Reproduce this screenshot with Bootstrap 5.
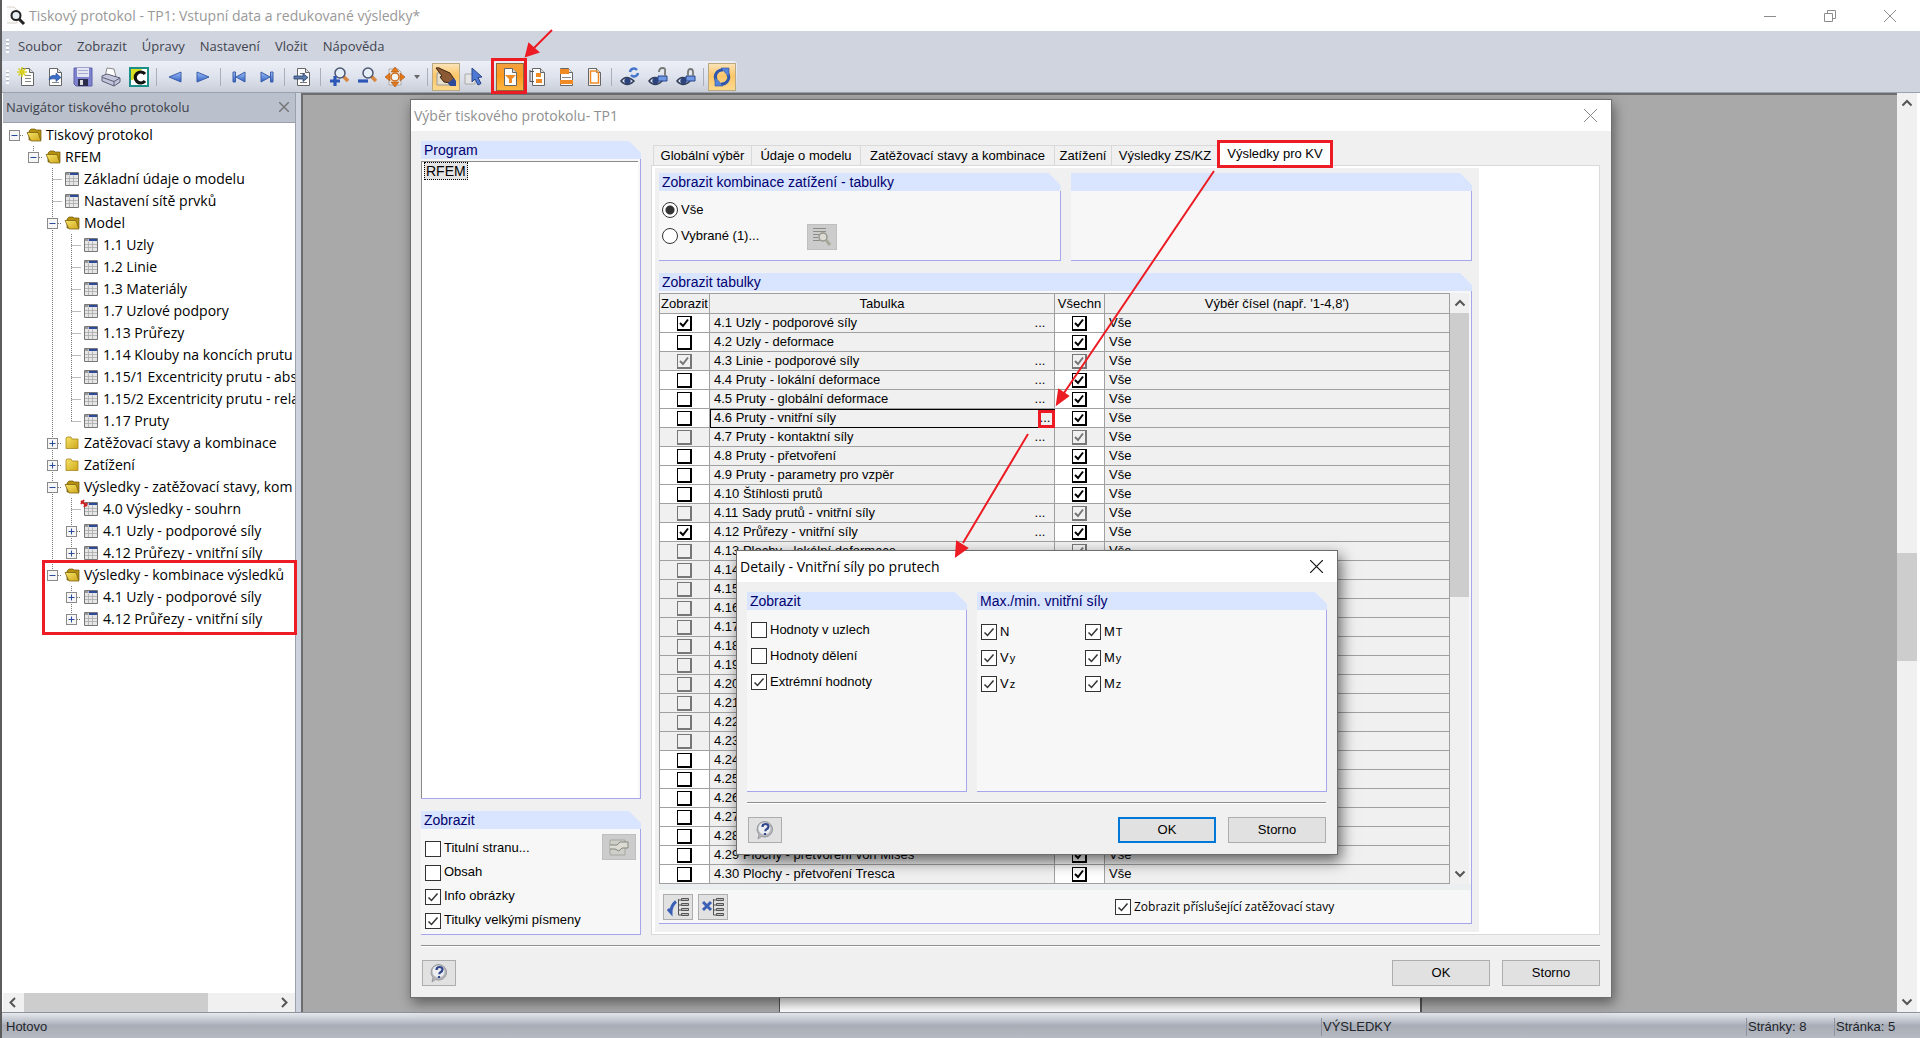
<!DOCTYPE html>
<html lang="cs">
<head>
<meta charset="utf-8">
<meta name="viewport" content="width=device-width, initial-scale=1">
<title>Tiskový protokol - TP1</title>
<link rel="stylesheet" href="https://cdn.jsdelivr.net/npm/bootstrap@5.3.0/dist/css/bootstrap.min.css">
<style>
  body { font-family: "Liberation Sans", Arial, sans-serif; font-size: 13px; line-height: 18px; color: #000; background: #fff; }
  svg { display: block; flex: none; }
  .seg { font-family: "Open Sans", "Segoe UI", sans-serif; }
  .app { border-left: 2px solid #5c5c5c; }

  /* window frame */
  .titlebar { height: 31px; font-size: 14px; color: #999; background: #fff; }
  .titlebar svg.logo { margin: 0 3px 0 4px; }
  .winctl { width: 60px; height: 31px; border: 0; background: none; padding: 0; color: #8c8c8c; }
  .menubar { height: 30px; background: #d0d4de; font-size: 13px; gap: 15px; }
  .menubar a { color: #3f4450; text-decoration: none; }
  .menubar .grip { margin-right: -6px; }
  .grip { width: 3px; height: 14px; background: repeating-linear-gradient(#fff 0 2px, #b4b9c6 2px 3px, transparent 3px 4px); }
  .toolrow { height: 32px; background: #d0d4de; border-bottom: 1px solid #9ba1ad; }
  .tools { height: 31px; width: 735px; background: linear-gradient(#eceff7, #dfe3ed 50%, #c9ced9); border-radius: 0 4px 4px 0; }
  .tbtn { width: 28px; height: 28px; padding: 0; border: 1px solid transparent; background: none; display: flex; align-items: center; justify-content: center; }
  .tbtn.drop { width: 15px; }
  .tbtn.lit { border-color: #b9a983; background: linear-gradient(#fbe3b8, #fcc668 45%, #fdd98c); }
  .tbtn.hot { border-color: #8a6a3c; background: linear-gradient(#f3a03e, #fb9a1f 45%, #fdb642); }
  .tsep { width: 8px; height: 18px; background: linear-gradient(#a9afbc, #a9afbc) 3px 0/1px 100% no-repeat; }

  /* navigator */
  .nav-pane { width: 293px; margin-left: 1px; border-right: 1px solid #9aa0ac; }
  .nav-head { height: 30px; background: #bac1cd; color: #3c4049; border-bottom: 1px solid #9aa0ac; font-size: 13px; padding: 0 2px 2px 3px; }
  .nav-tree { background: #fff; padding: 1px 0 0 2px; overflow: hidden; }
  .trow { height: 22px; font-size: 14px; white-space: nowrap; }
  .trow .fic { margin: 0 4px 0 2px; }
  .trow .tic { margin: 0 5px 0 3px; }
  .splitter { width: 5px; background: #ccd2de; }
  .sbar { background: #f0f0f0; }
  .vbar { width: 20px; margin-right: 3px; }
  .sthumb { background: #cdcdcd; }
  .sbtn { border: 0; background: none; padding: 0; display: flex; align-items: center; justify-content: center; color: #555; }
  .vbtn { height: 20px; flex: none; }

  /* document area */
  .canvas { background: #a9a9a9; border: 2px solid #6d6d6d; border-right: 0; border-bottom: 0; }
  .sheet { width: 643px; height: 700px; background: #fff; border-left: 1px solid #555; border-right: 2px solid #555; }

  /* dialogs */
  .dlg { position: absolute; background: #f0f0f0; border: 1px solid #6e6e6e; box-shadow: 2px 5px 12px rgba(0,0,0,.45); }
  .dlg-main { left: 410px; top: 99px; width: 1202px; height: 899px; }
  .dlg-det { left: 736px; top: 550px; width: 602px; height: 305px; box-shadow: 3px 6px 14px rgba(0,0,0,.6); }
  .dlg-title { height: 31px; background: #fff; font-size: 14px; padding: 0 12px 0 3px; }
  .dlg-main .dlg-title { color: #8f8f8f; }
  .dlg-x { border: 0; background: none; padding: 0; width: 18px; height: 18px; display: flex; align-items: center; justify-content: center; }
  .dlg-foot { padding: 10px 11px 11px 10px; }
  .foot-row { padding: 13px 0 0 1px; gap: 12px; }
  .grp { background: #f7f7f7; border-right: 1px solid #a6a6ea; border-bottom: 1px solid #a6a6ea; min-width: 0; display: flex; flex-direction: column; }
  .grp-head { height: 18px; margin: 0 -1px 1px 0; background: #f0f0f0; flex: none; }
  .grp-head span { display: block; height: 18px; padding-left: 3px; background: #d9e4fe; color: #000070; clip-path: polygon(0 0, calc(100% - 12px) 0, 100% 12px, 100% 100%, 0 100%); font-size: 14px; }
  .proglist { background: #fff; border-top: 1px solid #8a8a8a; border-left: 1px solid #8a8a8a; margin: 1px 2px 0 0; padding: 0 2px; }
  .proglist span { border: 1px dotted #000; background: #e4e4e4; padding: 0 1px; line-height: 16px; display: inline-block; font-size: 14px; }
  .ck, .rd { appearance: none; margin: 0; width: 16px; height: 16px; border: 1px solid #333; background: #fff; flex: none; }
  .rd { border-radius: 50%; }
  .rd:checked { background: radial-gradient(#333 0 4px, #fff 5px); }
  .ck:checked { background: #fff url("data:image/svg+xml,%3Csvg xmlns='http://www.w3.org/2000/svg' width='14' height='14'%3E%3Cpath d='M2.5 7.5L5.500 10.500L11.500 3.500' fill='none' stroke='%23333' stroke-width='1.500'/%3E%3C/svg%3E") center no-repeat; }
  .opt { display: flex; gap: 3px; line-height: 16px; }
  .rule { height: 2px; border-top: 1px solid #8f8f8f; background: #fff; }
  .wbtn { height: 26px; width: 98px; border: 1px solid #adadad; background: #e1e1e1; padding: 0; line-height: 18px; color: #000; }
  .wbtn.def { border: 2px solid #0078d7; }
  .ibtn { height: 26px; border: 1px solid #adadad; background: #e1e1e1; padding: 0; display: flex; align-items: center; justify-content: center; }
  .ibtn:disabled { background: #ccc; border-color: #bfbfbf; }
  .w34 { width: 34px; }
  .w30 { width: 30px; }

  /* main dialog */
  .main-body { padding: 10px 11px 0 10px; }
  .left-col { width: 220px; margin-right: 10px; gap: 12px; }
  .show-grp { height: 124px; }
  .show-in { padding: 11px 4px 0 4px; }
  .show-in .opt { line-height: 14px; }
  .show-btn { margin-top: -7px; }
  .tabrow { padding-left: 2px; height: 24px; }
  .tabrow button { border: 1px solid #d9d9d9; border-bottom: 0; border-right: 0; background: #f0f0f0; height: 20px; padding: 0; text-align: center; white-space: nowrap; color: #000; }
  .tabrow .on { height: 24px; background: #fff; border-right: 1px solid #d9d9d9; }
  .t1 { width: 98px; } .t2 { width: 109px; } .t3 { width: 194px; } .t4 { width: 57px; } .t5 { width: 107px; } .t6 { width: 114px; }
  .tabpane { background: #fff; border: 1px solid #d9d9d9; padding: 2px 0 2px 3px; }
  .tabin { width: 824px; background: #f0f0f0; padding: 5px 7px 8px 4px; }
  .top-groups { gap: 10px; height: 88px; margin-bottom: 12px; }
  .radios { padding: 10px 0 0 3px; }
  .radio-col { width: 145px; gap: 10px; }
  .pick { margin-top: 22px; }
  .tl-wrap { padding: 1px 2px 0 0; }
  .strip { height: 6px; background: #ebefef; }
  .vthumb { height: 284px; }
  .foot-in { gap: 5px; padding-left: 4px; }
  .rel { margin-left: auto; width: 356px; font-size: 12px; }

  /* table list */
  .tl { border-collapse: collapse; table-layout: fixed; width: 791px; }
  .tl th, .tl td { border: 1px solid #a0a0a0; height: 19px; padding: 0; font-weight: 400; line-height: 18px; overflow: hidden; white-space: nowrap; background: #f0f0f0; }
  .tl th { height: 20px; text-align: center; }
  .tl .c1, .tl .c3 { width: 50px; text-align: center; }
  .tl td.live { background: #fff; }
  .tl .txt { padding-left: 4px; }
  .tl .more { border: 0; background: none; padding: 0; width: 16px; line-height: 18px; margin-right: 6px; }
  .tl .cur .more { margin-right: 1px; }
  .tl .cur { outline: 1px solid #000; outline-offset: -1px; }
  .tck { appearance: none; display: block; margin: 0 auto; width: 15px; height: 15px; border: 1px solid #000; border-right-width: 2px; border-bottom-width: 2px; background: #fff; }
  .tck:checked { background: #fff url("data:image/svg+xml,%3Csvg xmlns='http://www.w3.org/2000/svg' width='12' height='12'%3E%3Cpath d='M2 6L5 9L10 2.500' fill='none' stroke='black' stroke-width='2'/%3E%3C/svg%3E") center no-repeat; }
  .tck:disabled { opacity: .5; background-color: #f0f0f0; }

  /* details dialog */
  .det-body { padding: 10px 10px 0 10px; gap: 10px; }
  .det-l { width: 220px; }
  .det-list { padding: 11px 4px; gap: 10px; }
  .force { padding: 13px 4px; }
  .force > div { gap: 10px; width: 104px; }
  .force .idx { font-size: 11px; padding-left: 1px; }

  /* status bar */
  .status { height: 26px; border-top: 1px solid #8e949f; background: linear-gradient(#e6e8ed, #b5bac4 40%, #a7acb6 50%, #b6bac2); color: #22252b; padding-top: 2px; }
  .status span { border-left: 1px solid #8e939d; padding-left: 1px; }
  .status .s0 { border: 0; padding-left: 4px; }
  .s2 { width: 425px; } .s3 { width: 88px; } .s4 { width: 86px; }
  .marks { position: absolute; left: 0; top: 0; pointer-events: none; }
</style>
<script src="https://cdn.jsdelivr.net/npm/bootstrap@5.3.0/dist/js/bootstrap.bundle.min.js"></script>
</head>
<body>
<svg width="0" height="0" class="position-absolute">
  <defs>
    <linearGradient id="gb" x2="0" y2="1"><stop stop-color="#9fc0f8"/><stop offset="1" stop-color="#2f5fc4"/></linearGradient>
    <linearGradient id="gf" x2="1" y2="1"><stop stop-color="#f6e468"/><stop offset="1" stop-color="#cfa61a"/></linearGradient>
    <symbol id="doc" viewBox="0 0 20 20"><path d="M4.500 1.500h8l4 4v13h-12z" fill="#fdfdfd" stroke="#666"/><path d="M12.500 1.500v4h4" fill="#ddd" stroke="#666"/></symbol>
    <symbol id="eye" viewBox="0 0 20 20"><path d="M1 14q5-7 13 0q-7 7-13 0z" fill="#dfe6f6" stroke="#333d55" stroke-width="1.500"/><circle cx="7.500" cy="14" r="3.200" fill="#2c437c"/></symbol>
    <symbol id="fopen" viewBox="0 0 16 14"><path d="M3 12V3l2-2h4l1 1h5v10z" fill="#b8900f" stroke="#6d570c" stroke-width=".7"/><path d="M1 4.500h11l3 8.500H5z" fill="url(#gf)" stroke="#6d570c" stroke-width=".7"/></symbol>
    <symbol id="fclosed" viewBox="0 0 16 14"><path d="M2 12.500V2l1-1h4l1 2h6v9.500z" fill="url(#gf)" stroke="#a8861a" stroke-width=".8"/></symbol>
    <symbol id="tbl" viewBox="0 0 14 14"><path d="M.5.500h13v13H.5z" fill="#e6e6e6" stroke="#777"/><path d="M1 1h3.500v2H1z" fill="#999"/><path d="M5 1h8v2H5z" fill="#2d4a9a"/><path d="M1 6.500h12M1 9.500h12M4.500 3.500V13M8.500 3.500V13" stroke="#aaa" stroke-width=".8"/></symbol>
    <symbol id="help" viewBox="0 0 20 20"><path d="M10 1.500a8 7.800 0 1 1-3.500 15L3 19l1-4.500A8 7.800 0 0 1 10 1.500z" fill="#b4b6ba" stroke="#9a9ca1"/><ellipse cx="9.500" cy="8.500" rx="6" ry="6" fill="#eceef1"/><path d="M7.500 7q0-3 3-3t3 2.600q0 1.600-2 2.600-1.200.6-1.200 2M10 13v2" fill="none" stroke="#33488c" stroke-width="2.200"/></symbol>
    <symbol id="tree" viewBox="0 0 12 20"><path d="M1.500 2v16M1.500 3h3M1.500 8h3M1.500 13h3M1.500 18h3" stroke="#555" fill="none"/><path d="M4.500 1.500h7v2h-7zM4.500 6.500h7v2h-7zM4.500 11.500h7v2h-7zM4.500 16.500h7v2h-7z" fill="#bbb" stroke="#555"/></symbol>
  </defs>
</svg>

<div class="app d-flex flex-column vh-100 overflow-hidden">
  <header class="titlebar seg d-flex align-items-center flex-shrink-0">
    <svg class="logo" width="20" height="20" viewBox="0 0 20 20"><path d="M1 1h7l3 3v13H1" fill="#fafafa" stroke="#d8d0c8"/><circle cx="10" cy="9.500" r="4.500" fill="#e9eef2" stroke="#222" stroke-width="2"/><path d="M13 13l5 5" stroke="#222" stroke-width="3"/></svg>
    <span>Tiskový protokol - TP1: Vstupní data a redukované výsledky*</span>
    <button class="winctl ms-auto" aria-label="Minimalizovat"><svg class="mx-auto" width="12" height="12"><path d="M0 6.500h12" stroke="currentColor"/></svg></button>
    <button class="winctl" aria-label="Obnovit"><svg class="mx-auto" width="12" height="12"><path d="M.5 3.500h8v8h-8zM3.500 3V.5h8v8H9" fill="none" stroke="currentColor"/></svg></button>
    <button class="winctl" aria-label="Zavřít"><svg class="mx-auto" width="12" height="12"><path d="M0 0l12 12M12 0L0 12" stroke="currentColor"/></svg></button>
  </header>

  <nav class="menubar seg d-flex align-items-center ps-1 flex-shrink-0">
    <span class="grip"></span>
    <a href="#">Soubor</a><a href="#">Zobrazit</a><a href="#">Úpravy</a><a href="#">Nastavení</a><a href="#">Vložit</a><a href="#">Nápověda</a>
  </nav>

  <div class="toolrow flex-shrink-0">
    <div class="tools d-flex align-items-center ps-1">
      <span class="grip me-1"></span>
      <button class="tbtn" aria-label="Nový"><svg width="20" height="20"><use href="#doc"/><path d="M8 8.500h6M8 11.500h6M8 14.500h6" stroke="#888"/><path d="M5 0v10M0 5h10M1.500 1.500l7 7M8.500 1.500l-7 7" stroke="#d8cf20" stroke-width="1.500"/></svg></button>
      <button class="tbtn" aria-label="Otevřít"><svg width="20" height="20"><use href="#doc"/><path d="M7 15.500h7" stroke="#888"/><path d="M4 12.500q1-5 7-4V6l5 4.500-5 4V12q-4-.5-7 .5z" fill="#3d6fc8" stroke="#244a92" stroke-width=".6"/></svg></button>
      <button class="tbtn" aria-label="Uložit"><svg width="20" height="20"><path d="M1 1h18v18H3l-2-2z" fill="#7f83cf" stroke="#5d61a8"/><path d="M4 1h12v9H4z" fill="#e4e5f2"/><path d="M5 3.500h10M5 6.500h10" stroke="#a9abd0"/><path d="M5 12h10v7H5z" fill="#2b2d4a"/><path d="M7 13h3v5H7z" fill="#ddd"/></svg></button>
      <button class="tbtn" aria-label="Tisk"><svg width="20" height="20"><path d="M4 10L6 1l7 1 2 8z" fill="#fff" stroke="#888"/><path d="M1 9l5-2 13 4v4l-6 4L1 14z" fill="#c3c5da" stroke="#5a5c75"/><path d="M1.500 10.500l11.500 4 6-3.500M13 14.500V19" fill="none" stroke="#5a5c75"/></svg></button>
      <button class="tbtn" aria-label="Písmo"><svg width="20" height="20"><path d="M1 1h18v18H1z" fill="#fff" stroke="#1b8f88" stroke-width="2"/><path d="M2 2h11L4 13H2z" fill="#d9e021"/><path d="M16 7a5.500 5.500 0 1 0 0 7" fill="none" stroke="#111" stroke-width="3.200"/></svg></button>
      <span class="tsep"></span>
      <button class="tbtn" aria-label="Předchozí"><svg width="14" height="14"><path d="M1 7l12-5v10z" fill="url(#gb)" stroke="#3a5ea8"/></svg></button>
      <button class="tbtn" aria-label="Další"><svg width="14" height="14"><path d="M13 7L1 2v10z" fill="url(#gb)" stroke="#3a5ea8"/></svg></button>
      <span class="tsep"></span>
      <button class="tbtn" aria-label="První"><svg width="14" height="14"><path d="M1 2h2.500v10H1zM4 7l9-5v10z" fill="url(#gb)" stroke="#3a5ea8"/></svg></button>
      <button class="tbtn" aria-label="Poslední"><svg width="14" height="14"><path d="M13 2h-2.500v10H13zM10 7L1 2v10z" fill="url(#gb)" stroke="#3a5ea8"/></svg></button>
      <span class="tsep"></span>
      <button class="tbtn" aria-label="Přejít"><svg width="20" height="20"><use href="#doc"/><path d="M7 6.500h5M7 15.500h7" stroke="#777"/><path d="M1 9h9V6.500l5 4-5 4V12H1z" fill="#5b7aa8" stroke="#27406b" stroke-width=".8"/></svg></button>
      <span class="tsep"></span>
      <button class="tbtn" aria-label="Zvětšit"><svg width="20" height="20"><path d="M14 9l5 5" stroke="#d98640" stroke-width="3.500"/><circle cx="11" cy="6" r="5" fill="#e6eefa" stroke="#4a5670" stroke-width="1.500"/><path d="M6 9v10M1 14h10" stroke="#2c56b8" stroke-width="3.200"/></svg></button>
      <button class="tbtn" aria-label="Zmenšit"><svg width="20" height="20"><path d="M14 9l5 5" stroke="#d98640" stroke-width="3.500"/><circle cx="11" cy="6" r="5" fill="#e6eefa" stroke="#4a5670" stroke-width="1.500"/><path d="M1 14h10" stroke="#2c56b8" stroke-width="3.200"/></svg></button>
      <button class="tbtn" aria-label="Zobrazit vše"><svg width="20" height="20"><path d="M4 2h9l3 3v13H4z" fill="#eee" stroke="#aaa"/><path d="M10 0l4 5H6zM10 20l4-5H6zM0 10l5-4v8zM20 10l-5-4v8z" fill="#e57a1c" stroke="#a8500c" stroke-width=".6"/><circle cx="10" cy="10" r="4" fill="#f4f4f4" stroke="#d06a18" stroke-width="1.500"/></svg></button>
      <button class="tbtn drop" aria-label="Více"><svg width="6" height="4"><path d="M0 0h6L3 4z" fill="#666"/></svg></button>
      <span class="tsep"></span>
      <button class="tbtn lit" aria-label="Ruka"><svg width="22" height="22"><path d="M2 7h12v12H2z" fill="#e8e0cc" stroke="#999"/><path d="M1 2q3-1 5 1l9 4 4 6-4 4-6-1-4-5 2-1z" fill="#8b5a34" stroke="#3d2412"/><path d="M13 17l6-5 2 3v5h-6z" fill="#2d4896"/></svg></button>
      <button class="tbtn" aria-label="Výběr"><svg width="20" height="20"><path d="M1 7h10v10H1z" fill="#e4e4e4" stroke="#aaa"/><path d="M8 1l10 9-4 .5 3 6-3 1.500-3-6-3 3z" fill="#4c7ad4" stroke="#2a4488"/></svg></button>
      <span class="tsep"></span>
      <button class="tbtn hot" aria-label="Filtr"><svg width="20" height="20"><use href="#doc"/><path d="M5 8h11l-4 4v4H9v-4z" fill="#f08a24"/></svg></button>
      <button class="tbtn" aria-label="Vložit"><svg width="20" height="20"><use href="#doc"/><path d="M2 3v12M2 4.500h4M2 14.500h4" stroke="#555"/><path d="M8 6h5v4H8zM8 12h6v4H8z" fill="#f08a24"/></svg></button>
      <button class="tbtn" aria-label="Záhlaví"><svg width="20" height="20"><use href="#doc"/><path d="M4 2h9v5H4zM4 13h13v4H4z" fill="#f08a24"/><path d="M6 10.500h9" stroke="#888"/></svg></button>
      <button class="tbtn" aria-label="Okraje"><svg width="20" height="20"><use href="#doc"/><path d="M6.500 4h6l2 2v10h-8z" fill="none" stroke="#f08a24" stroke-width="1.500"/></svg></button>
      <span class="tsep"></span>
      <button class="tbtn" aria-label="Obnovit náhled"><svg width="20" height="20"><use href="#eye"/><path d="M10 5a4 4 0 0 1 7-2M18 6a4 4 0 0 1-7 2" fill="none" stroke="#4676cc" stroke-width="2.400"/></svg></button>
      <button class="tbtn" aria-label="Odemknout"><svg width="20" height="20"><use href="#eye"/><path d="M10 9h9v5h-9z" fill="#6f97e4" stroke="#27458c"/><path d="M11 5q0-4 3.500-4T17 4v5" fill="none" stroke="#777" stroke-width="1.800"/></svg></button>
      <button class="tbtn" aria-label="Zamknout"><svg width="20" height="20"><use href="#eye"/><path d="M10 9h9v5h-9z" fill="#6f97e4" stroke="#27458c"/><path d="M12 9V5q0-3 2.500-3T17 5v4" fill="none" stroke="#777" stroke-width="1.800"/></svg></button>
      <span class="tsep"></span>
      <button class="tbtn lit" aria-label="Aktualizovat"><svg width="20" height="20"><path d="M4 13a7 7 0 0 1 7-10M16 7a7 7 0 0 1-7 10" fill="none" stroke="#2f57ae" stroke-width="3"/><path d="M9 1h8v9zM11 19H3v-9z" fill="#5584dc" stroke="#2f4f98" stroke-width=".6"/></svg></button>
    </div>
  </div>

  <main class="d-flex flex-grow-1 overflow-hidden">
    <aside class="nav-pane d-flex flex-column flex-shrink-0">
      <div class="nav-head seg d-flex align-items-center justify-content-between">
        <span>Navigátor tiskového protokolu</span>
        <button class="dlg-x" aria-label="Zavřít navigátor"><svg width="10" height="10"><path d="M0 0l10 10M10 0L0 10" stroke="#777" stroke-width="1.500"/></svg></button>
      </div>
      <div class="nav-tree seg flex-grow-1" id="tree-box" role="tree"></div>
      <div class="sbar d-flex align-items-stretch">
        <button class="sbtn px-1" aria-label="Vlevo"><svg width="13" height="19"><path d="M8 5L3.500 9.500 8 14" fill="none" stroke="currentColor" stroke-width="2"/></svg></button>
        <div class="sthumb" id="hthumb"></div>
        <button class="sbtn px-1 ms-auto" aria-label="Vpravo"><svg width="13" height="19"><path d="M4 5l4.500 4.500L4 14" fill="none" stroke="currentColor" stroke-width="2"/></svg></button>
      </div>
    </aside>
    <div class="splitter flex-shrink-0"></div>
    <section class="canvas flex-grow-1 d-flex justify-content-center align-items-end overflow-hidden"><div class="sheet"></div></section>
    <div class="sbar vbar d-flex flex-column flex-shrink-0">
      <button class="sbtn vbtn" aria-label="Nahoru"><svg width="12" height="10"><path d="M1.500 7.500L6 3l4.500 4.500" fill="none" stroke="currentColor" stroke-width="2"/></svg></button>
      <div id="vgap-a"></div>
      <div class="sthumb" id="vthumb"></div>
      <div id="vgap-b"></div>
      <button class="sbtn vbtn" aria-label="Dolů"><svg width="12" height="10"><path d="M1.500 2.500L6 7l4.500-4.500" fill="none" stroke="currentColor" stroke-width="2"/></svg></button>
    </div>
  </main>

  <footer class="status d-flex align-items-center flex-shrink-0">
    <span class="s0 flex-grow-1">Hotovo</span><span class="s2">VÝSLEDKY</span><span class="s3">Stránky: 8</span><span class="s4">Stránka: 5</span>
  </footer>
</div>

<section class="dlg dlg-main d-flex flex-column" role="dialog" aria-label="Výběr tiskového protokolu">
  <div class="dlg-title seg d-flex align-items-center justify-content-between">
    <span>Výběr tiskového protokolu- TP1</span>
    <button class="dlg-x" aria-label="Zavřít"><svg width="13" height="13"><path d="M0 0l13 13M13 0L0 13" stroke="#8a8a8a"/></svg></button>
  </div>
  <div class="main-body d-flex flex-grow-1">
    <div class="left-col d-flex flex-column">
      <fieldset class="grp flex-grow-1">
        <div class="grp-head"><span>Program</span></div>
        <div class="proglist flex-grow-1"><span>RFEM</span></div>
      </fieldset>
      <fieldset class="grp show-grp">
        <div class="grp-head"><span>Zobrazit</span></div>
        <div class="d-flex justify-content-between show-in">
          <div class="d-flex flex-column gap-2">
            <label class="opt"><input type="checkbox" class="ck">Titulní stranu...</label>
            <label class="opt"><input type="checkbox" class="ck">Obsah</label>
            <label class="opt"><input type="checkbox" class="ck" checked>Info obrázky</label>
            <label class="opt"><input type="checkbox" class="ck" checked>Titulky velkými písmeny</label>
          </div>
          <button class="ibtn w34 show-btn" disabled aria-label="Titulní strana"><svg width="20" height="18"><path d="M1 2h15v15H1z" fill="#cfcfc9" stroke="#a5a59f"/><path d="M1 7h7l3-3h8v6h-6l-3 3-4-2H1" fill="#dcdcd4" stroke="#85857f"/></svg></button>
        </div>
      </fieldset>
    </div>
    <div class="flex-grow-1 d-flex flex-column">
      <div class="tabrow d-flex align-items-end" role="tablist">
        <button role="tab" class="t1">Globální výběr</button><button role="tab" class="t2">Údaje o modelu</button><button role="tab" class="t3">Zatěžovací stavy a kombinace</button><button role="tab" class="t4">Zatížení</button><button role="tab" class="t5">Výsledky ZS/KZ</button><button role="tab" class="t6 on">Výsledky pro KV</button>
      </div>
      <div class="tabpane flex-grow-1 d-flex">
        <div class="tabin d-flex flex-column">
          <div class="d-flex top-groups">
            <fieldset class="grp flex-fill w-50">
              <div class="grp-head"><span>Zobrazit kombinace zatížení - tabulky</span></div>
              <div class="d-flex align-items-start radios">
                <div class="d-flex flex-column radio-col">
                  <label class="opt"><input type="radio" name="kz" class="rd" checked>Vše</label>
                  <label class="opt"><input type="radio" name="kz" class="rd">Vybrané (1)...</label>
                </div>
                <button class="ibtn w30 pick" disabled aria-label="Vybrat"><svg width="20" height="20"><path d="M1 1.500h13M1 4.500h13M1 7.500h6M1 10.500h5M1 13.500h7" stroke="#8d8d88"/><circle cx="11" cy="10" r="4" fill="#dcdcd4" stroke="#96968c" stroke-width="1.500"/><path d="M14 13l4 5" stroke="#a8a898" stroke-width="3"/></svg></button>
              </div>
            </fieldset>
            <fieldset class="grp flex-fill w-50"><div class="grp-head"><span></span></div></fieldset>
          </div>
          <fieldset class="grp flex-grow-1">
            <div class="grp-head"><span>Zobrazit tabulky</span></div>
            <div class="d-flex tl-wrap">
              <table class="tl">
                <thead><tr><th class="c1">Zobrazit</th><th>Tabulka</th><th class="c3">Všechn</th><th>Výběr čísel (např. '1-4,8')</th></tr></thead>
                <tbody id="rows"></tbody>
              </table>
              <div class="sbar flex-grow-1 d-flex flex-column">
                <button class="sbtn vbtn" aria-label="Nahoru"><svg width="12" height="10"><path d="M1.500 7.500L6 3l4.500 4.500" fill="none" stroke="currentColor" stroke-width="2"/></svg></button>
                <div class="sthumb vthumb"></div>
                <button class="sbtn vbtn mt-auto" aria-label="Dolů"><svg width="12" height="10"><path d="M1.500 2.500L6 7l4.500-4.500" fill="none" stroke="currentColor" stroke-width="2"/></svg></button>
              </div>
            </div>
            <div class="strip"></div>
            <div class="d-flex align-items-center pt-1 foot-in">
              <button class="ibtn w30" aria-label="Vybrat vše"><svg width="22" height="20"><path d="M1 12l3 3.500q0-7 5-11" fill="none" stroke="#3a5fb5" stroke-width="3"/><use href="#tree" x="10" width="12" height="20"/></svg></button>
              <button class="ibtn w30" aria-label="Zrušit vše"><svg width="22" height="20"><path d="M1 5l8 8M9 5l-8 8" stroke="#3a5fb5" stroke-width="3"/><use href="#tree" x="10" width="12" height="20"/></svg></button>
              <label class="opt seg rel"><input type="checkbox" class="ck" checked>Zobrazit příslušející zatěžovací stavy</label>
            </div>
          </fieldset>
        </div>
      </div>
    </div>
  </div>
  <div class="dlg-foot">
    <div class="rule"></div>
    <div class="d-flex foot-row">
      <button class="ibtn w34 me-auto" aria-label="Nápověda"><svg width="20" height="20"><use href="#help"/></svg></button>
      <button class="wbtn">OK</button><button class="wbtn">Storno</button>
    </div>
  </div>
</section>

<section class="dlg dlg-det d-flex flex-column" role="dialog" aria-label="Detaily">
  <div class="dlg-title seg d-flex align-items-center justify-content-between">
    <span>Detaily - Vnitřní síly po prutech</span>
    <button class="dlg-x" aria-label="Zavřít"><svg width="13" height="13"><path d="M0 0l13 13M13 0L0 13" stroke="#111" stroke-width="1.200"/></svg></button>
  </div>
  <div class="det-body d-flex flex-grow-1">
    <fieldset class="grp det-l">
      <div class="grp-head"><span>Zobrazit</span></div>
      <div class="d-flex flex-column det-list">
        <label class="opt"><input type="checkbox" class="ck">Hodnoty v uzlech</label>
        <label class="opt"><input type="checkbox" class="ck">Hodnoty dělení</label>
        <label class="opt"><input type="checkbox" class="ck" checked>Extrémní hodnoty</label>
      </div>
    </fieldset>
    <fieldset class="grp flex-grow-1">
      <div class="grp-head"><span>Max./min. vnitřní síly</span></div>
      <div class="d-flex force">
        <div class="d-flex flex-column">
          <label class="opt"><input type="checkbox" class="ck" checked><span>N</span></label>
          <label class="opt"><input type="checkbox" class="ck" checked><span>V<span class="idx">y</span></span></label>
          <label class="opt"><input type="checkbox" class="ck" checked><span>V<span class="idx">z</span></span></label>
        </div>
        <div class="d-flex flex-column">
          <label class="opt"><input type="checkbox" class="ck" checked><span>M<span class="idx">T</span></span></label>
          <label class="opt"><input type="checkbox" class="ck" checked><span>M<span class="idx">y</span></span></label>
          <label class="opt"><input type="checkbox" class="ck" checked><span>M<span class="idx">z</span></span></label>
        </div>
      </div>
    </fieldset>
  </div>
  <div class="dlg-foot">
    <div class="rule"></div>
    <div class="d-flex foot-row">
      <button class="ibtn w34 me-auto" aria-label="Nápověda"><svg width="20" height="20"><use href="#help"/></svg></button>
      <button class="wbtn def">OK</button><button class="wbtn">Storno</button>
    </div>
  </div>
</section>

<svg class="marks" width="1400" height="660" viewBox="0 0 1400 660" aria-hidden="true">
  <g fill="none" stroke="#ed1c24" stroke-width="3">
    <path d="M492.500 59.500h33v33h-33zM1218.500 141.500h113v25h-113zM1039.500 411.500h14v15h-14zM43.500 561.500h252v72h-252z"/>
  </g>
  <g fill="#ed1c24" stroke="#ed1c24" stroke-width="2">
    <path d="M552 30L534 48M1214 171L1064 393M1028 434L963 543" fill="none"/>
    <path d="M526 56l3-12 9 8zM1057 404l2-14 9 6zM956 556l1-14 10 6z"/>
  </g>
</svg>

<script>
  // Tree: one guide code per 19px column, then icon and caption.
  // . empty, | line, t branch, l last branch; expanders: r root, m open, a open and last, p closed, q closed and last
  const tree = [
    ['r', 'fopen', 'Tiskový protokol'], ['.a', 'fopen', 'RFEM'],
    ['..t', 'tbl', 'Základní údaje o modelu'], ['..t', 'tbl', 'Nastavení sítě prvků'],
    ['..m', 'fopen', 'Model'],
    ['..|t', 'tbl', '1.1 Uzly'], ['..|t', 'tbl', '1.2 Linie'], ['..|t', 'tbl', '1.3 Materiály'],
    ['..|t', 'tbl', '1.7 Uzlové podpory'], ['..|t', 'tbl', '1.13 Průřezy'],
    ['..|t', 'tbl', '1.14 Klouby na koncích prutu'], ['..|t', 'tbl', '1.15/1 Excentricity prutu - abs'],
    ['..|t', 'tbl', '1.15/2 Excentricity prutu - rela'], ['..|l', 'tbl', '1.17 Pruty'],
    ['..p', 'fclosed', 'Zatěžovací stavy a kombinace'], ['..p', 'fclosed', 'Zatížení'],
    ['..m', 'fopen', 'Výsledky - zatěžovací stavy, kom'],
    ['..|t', 'pin', '4.0 Výsledky - souhrn'], ['..|p', 'tbl', '4.1 Uzly - podporové síly'],
    ['..|q', 'tbl', '4.12 Průřezy - vnitřní síly'],
    ['..a', 'fopen', 'Výsledky - kombinace výsledků'],
    ['...p', 'tbl', '4.1 Uzly - podporové síly'], ['...q', 'tbl', '4.12 Průřezy - vnitřní síly']
  ];
  function guide(c) {
    let d = '';
    if ('|tmp'.includes(c)) d += 'M9.500 0V22';
    if ('laq'.includes(c)) d += 'M9.500 0V11';
    if ('tl'.includes(c)) d += 'M9.500 11.500H19';
    if ('rampq'.includes(c)) d += 'M15 11.500H19';
    let box = '';
    if ('rampq'.includes(c)) {
      box = '<rect x="4.500" y="6.500" width="10" height="10" fill="#f6f6f6" stroke="#8a8a8a"/>' +
            '<path d="M6.500 11.500h6' + ('pq'.includes(c) ? 'M9.500 8.500v6' : '') + '" stroke="#2a4a9a"/>';
    }
    return `<svg width="19" height="22"><path d="${d}" stroke="#777" stroke-dasharray="1 1" fill="none"/>${box}</svg>`;
  }
  function icon(n) {
    if (n[0] === 'f') return `<svg width="16" height="14" class="fic"><use href="#${n}"/></svg>`;
    const pin = n === 'pin' ? '<path d="M-3-1l6 5M0-2l-3 4M3 1L0 5" stroke="#c22" stroke-width="2"/>' : '';
    return `<svg width="14" height="14" class="tic overflow-visible"><use href="#tbl"/>${pin}</svg>`;
  }
  document.getElementById('tree-box').innerHTML = tree.map(([g, i, t]) =>
    `<div class="trow d-flex align-items-center" role="treeitem">${[...g].map(guide).join('')}${icon(i)}<span>${t}</span></div>`).join('');

  // Table list: caption, state of "Zobrazit" (c checked, u unchecked, uppercase disabled),
  // state of "Všechny", details link (2 marks the current row), number selection
  const list = [
    ['4.1 Uzly - podporové síly', 'c', 'c', 1, 'Vše'], ['4.2 Uzly - deformace', 'u', 'c', 0, 'Vše'],
    ['4.3 Linie - podporové síly', 'C', 'C', 1, 'Vše'], ['4.4 Pruty - lokální deformace', 'u', 'c', 1, 'Vše'],
    ['4.5 Pruty - globální deformace', 'u', 'c', 1, 'Vše'], ['4.6 Pruty - vnitřní síly', 'u', 'c', 2, 'Vše'],
    ['4.7 Pruty - kontaktní síly', 'U', 'C', 1, 'Vše'], ['4.8 Pruty - přetvoření', 'u', 'c', 0, 'Vše'],
    ['4.9 Pruty - parametry pro vzpěr', 'u', 'c', 0, 'Vše'], ['4.10 Štíhlosti prutů', 'u', 'c', 0, 'Vše'],
    ['4.11 Sady prutů - vnitřní síly', 'U', 'C', 1, 'Vše'], ['4.12 Průřezy - vnitřní síly', 'c', 'c', 1, 'Vše'],
    ['4.13 Plochy - lokální deformace', 'U', 'C', 0, 'Vše']
  ];
  for (let n = 14; n <= 23; n++) list.push([`4.${n}`, 'U', 'C', 0, '']);
  for (let n = 24; n <= 28; n++) list.push([`4.${n}`, 'u', 'c', 0, '']);
  list.push(['4.29 Plochy - přetvoření von Mises', 'u', 'c', 0, 'Vše'], ['4.30 Plochy - přetvoření Tresca', 'u', 'c', 0, 'Vše']);
  const tick = (s, label) => {
    const off = s === s.toUpperCase();
    return `<td class="${off ? '' : 'live'}"><input type="checkbox" class="tck" aria-label="${label}"${s.toLowerCase() === 'c' ? ' checked' : ''}${off ? ' disabled' : ''}></td>`;
  };
  document.getElementById('rows').innerHTML = list.map(([t, a, b, m, v]) =>
    `<tr>${tick(a, t)}<td class="txt${m === 2 ? ' cur' : ''}"><div class="d-flex justify-content-between"><span>${t}</span>${m ? '<button class="more">...</button>' : ''}</div></td>${tick(b, t + ' - vše')}<td class="txt">${v}</td></tr>`).join('');

  const setStyle = (id, k, v) => { document.getElementById(id).style[k] = v; };
  setStyle('hthumb', 'width', '63%');
  setStyle('vgap-a', 'flexGrow', 438);
  setStyle('vthumb', 'flexGrow', 108);
  setStyle('vgap-b', 'flexGrow', 330);
</script>
</body>
</html>
